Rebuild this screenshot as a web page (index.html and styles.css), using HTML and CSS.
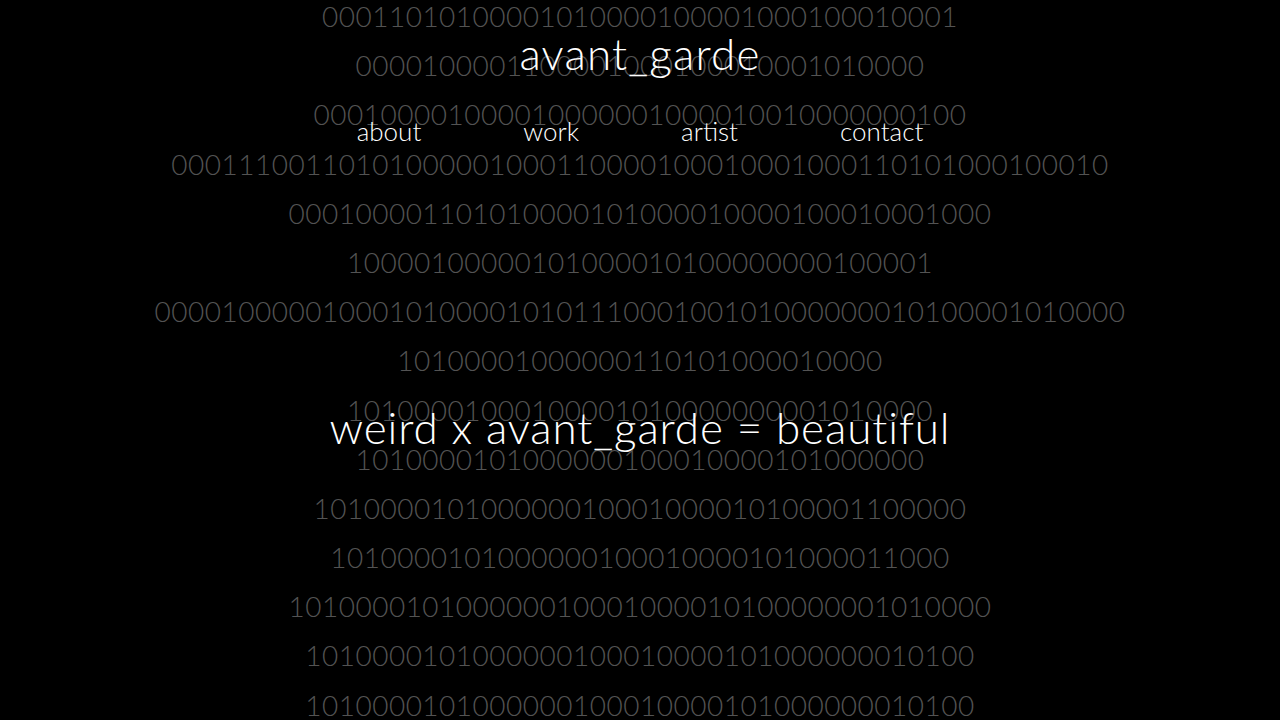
FILE: index.html
```html
<!DOCTYPE html>
<html lang="en">
<head>
<meta charset="utf-8">
<title>avant_garde</title>
<link rel="stylesheet" href="styles.css">
</head>
<body>
<div class="page">
  <div class="binary" aria-hidden="true">
    <div class="row">00011010100001010000100001000100010001</div>
    <div class="row">0000100001100001000100010001010000</div>
    <div class="row">000100001000010000001000010010000000100</div>
    <div class="row">00011100110101000001000110000100010001000110101000100010</div>
    <div class="row">000100001101010000101000010000100010001000</div>
    <div class="row">10000100000101000010100000000100001</div>
    <div class="row">0000100000100010100001010111000100101000000010100001010000</div>
    <div class="row">10100001000000110101000010000</div>
    <div class="row">10100001000100001010000000001010000</div>
    <div class="row">1010000101000000100010000101000000</div>
    <div class="row">101000010100000010001000010100001100000</div>
    <div class="row">1010000101000000100010000101000011000</div>
    <div class="row">101000010100000010001000010100000001010000</div>
    <div class="row">1010000101000000100010000101000000010100</div>
    <div class="row">1010000101000000100010000101000000010100</div>
  </div>
  <div class="content">
    <header class="masthead">
      <h1 class="logo">avant_garde</h1>
      <nav class="nav">
        <a class="nav-link" href="#about">about</a>
        <a class="nav-link" href="#work">work</a>
        <a class="nav-link" href="#artist">artist</a>
        <a class="nav-link" href="#contact">contact</a>
      </nav>
    </header>
    <main class="hero">
      <p class="tagline">weird x avant_garde = beautiful</p>
    </main>
  </div>
</div>
</body>
</html>
```
FILE: styles.css
```css
html, body {
  margin: 0;
  padding: 0;
  background: #000;
}

body {
  font-family: "Lato", "Liberation Sans", sans-serif;
  font-weight: 300;
  color: #fff;
}

.page {
  position: relative;
  width: 1280px;
  height: 720px;
  overflow: hidden;
  background: #000;
}

.binary {
  position: absolute;
  left: 0;
  right: 0;
  top: -8px;
  display: flex;
  flex-direction: column;
  align-items: center;
}

.row {
  height: 49.2px;
  line-height: 49.2px;
  font-size: 28px;
  font-weight: 300;
  font-variant-numeric: tabular-nums;
  letter-spacing: 0.5px;
  color: #535353;
  white-space: nowrap;
}

.content {
  position: relative;
  display: flex;
  flex-direction: column;
  align-items: center;
}

.masthead {
  display: flex;
  flex-direction: column;
  align-items: center;
  padding-top: 31px;
}

.logo {
  margin: 0;
  font-size: 44px;
  line-height: 44px;
  font-weight: 300;
  letter-spacing: 1.2px;
  color: #fff;
}

.nav {
  display: flex;
  gap: 102px;
  margin-top: 43px;
}

.nav-link {
  font-size: 26px;
  line-height: 26px;
  font-weight: 300;
  color: #fff;
  text-decoration: none;
}

.hero {
  margin-top: 261px;
}

.tagline {
  margin: 0;
  font-size: 44px;
  line-height: 44px;
  font-weight: 300;
  letter-spacing: 0.9px;
  color: #fff;
}
```
